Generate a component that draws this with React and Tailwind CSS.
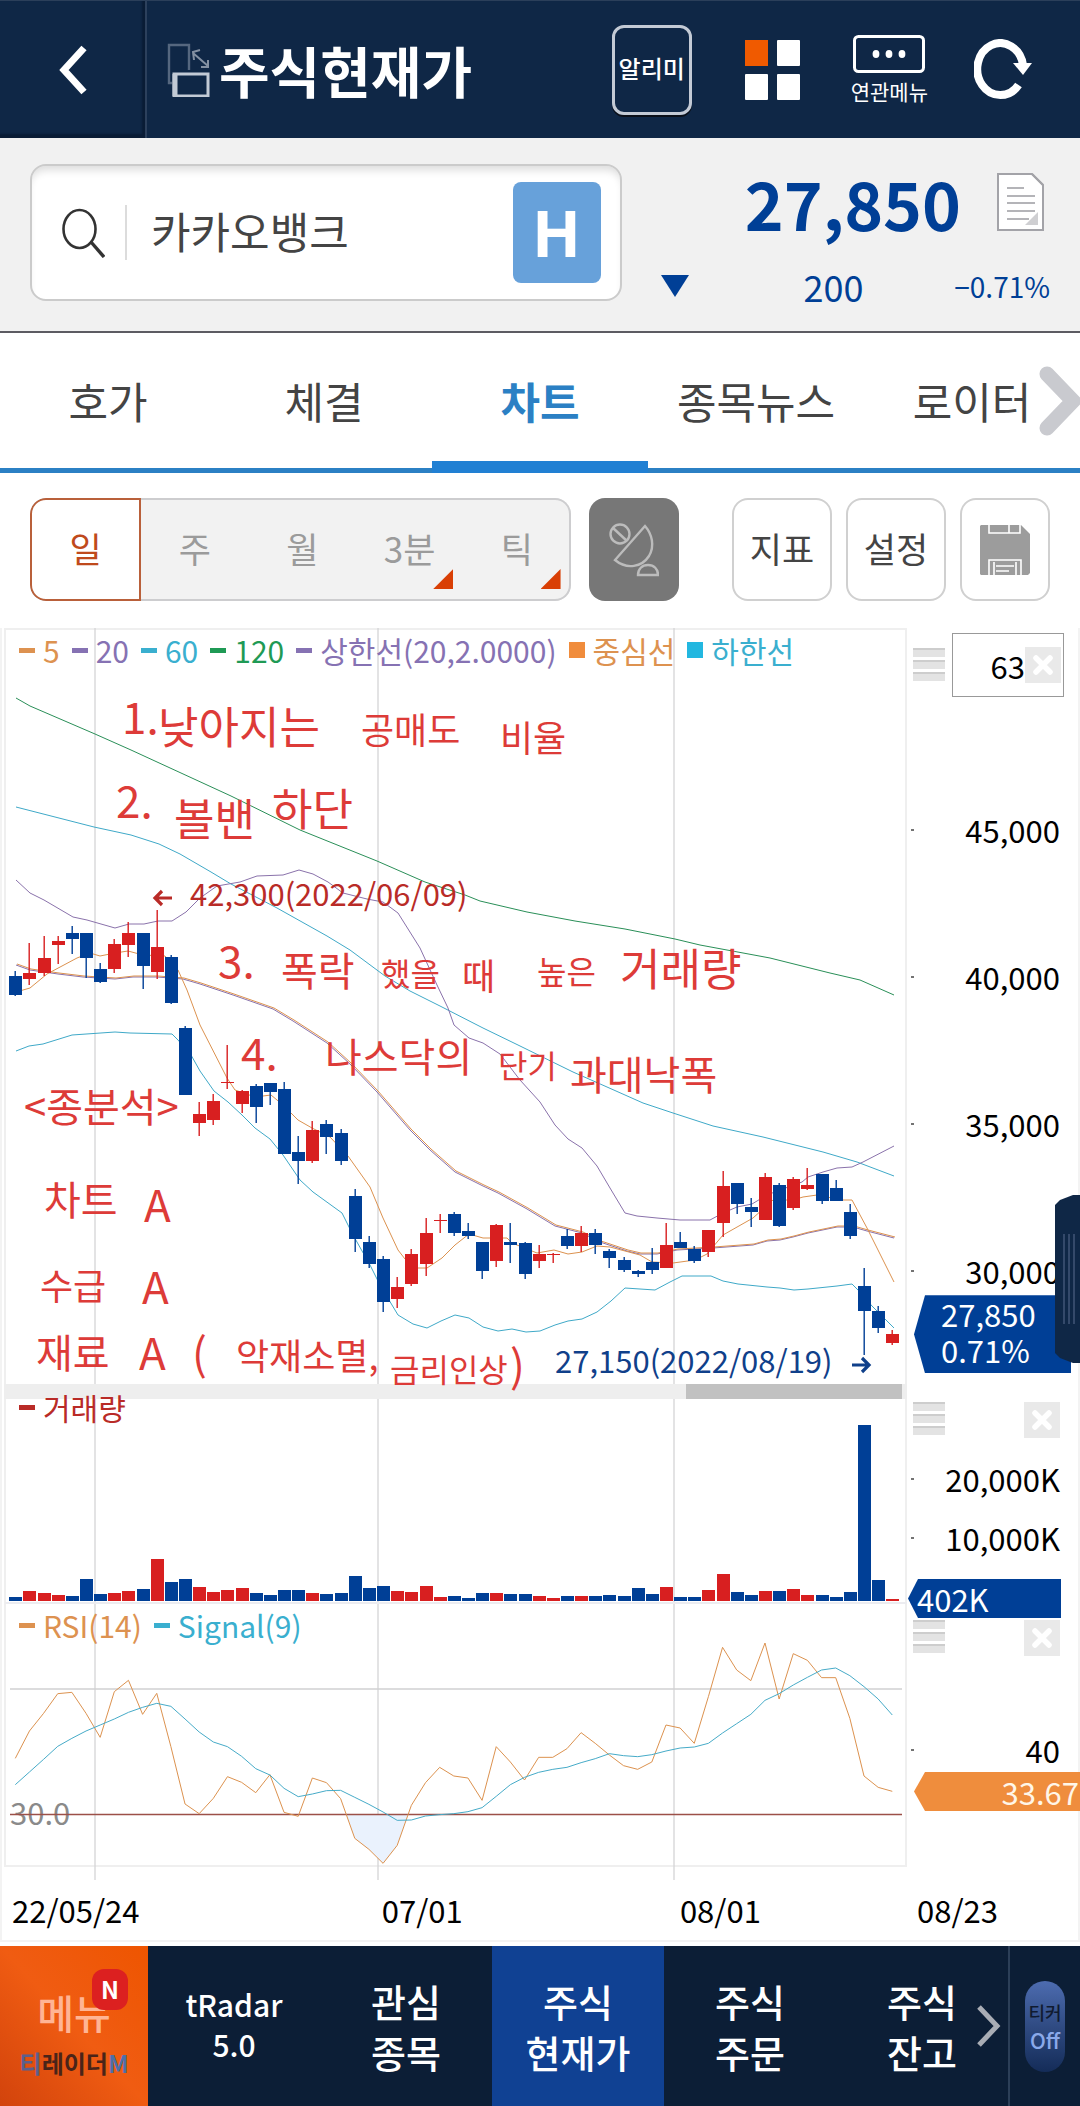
import { useState } from "react";

const RED = "#d81f20";
const BLUE = "#003f96";

// r = up day, b = down day, then high / body top / body bottom / low
const candles = [
  ["b", 971, 976, 995, 996], ["r", 943, 973, 979, 985], ["r", 936, 958, 973, 976],
  ["r", 936, 941, 945, 964], ["b", 926, 933, 939, 954], ["b", 933, 933, 958, 978],
  ["b", 963, 969, 982, 983], ["r", 939, 944, 969, 973], ["r", 922, 933, 945, 957],
  ["b", 933, 933, 966, 989], ["r", 910, 947, 972, 979], ["b", 955, 957, 1003, 1004],
  ["b", 1026, 1028, 1095, 1095], ["r", 1102, 1114, 1123, 1136], ["r", 1094, 1101, 1120, 1125],
  ["r", 1045, 1082, 1083, 1089], ["r", 1090, 1091, 1104, 1113], ["b", 1084, 1086, 1107, 1123],
  ["b", 1083, 1083, 1092, 1105], ["b", 1082, 1089, 1154, 1154], ["b", 1136, 1152, 1161, 1184],
  ["r", 1121, 1130, 1161, 1163], ["b", 1120, 1124, 1137, 1154], ["b", 1129, 1133, 1161, 1165],
  ["b", 1189, 1196, 1239, 1252], ["b", 1236, 1242, 1264, 1268], ["b", 1256, 1259, 1302, 1312],
  ["r", 1277, 1287, 1299, 1308], ["r", 1249, 1254, 1284, 1286], ["r", 1218, 1233, 1264, 1276],
  ["r", 1214, 1220, 1221, 1233], ["b", 1212, 1214, 1233, 1236], ["b", 1223, 1231, 1236, 1239],
  ["b", 1242, 1242, 1271, 1279], ["r", 1224, 1225, 1261, 1267], ["b", 1223, 1242, 1245, 1263],
  ["b", 1242, 1243, 1274, 1279], ["r", 1245, 1254, 1261, 1268], ["r", 1253, 1254, 1255, 1263],
  ["b", 1229, 1236, 1246, 1249], ["r", 1226, 1233, 1246, 1252], ["b", 1229, 1233, 1245, 1254],
  ["b", 1249, 1251, 1258, 1268], ["b", 1257, 1260, 1270, 1272], ["b", 1270, 1271, 1274, 1277],
  ["b", 1248, 1262, 1270, 1274], ["r", 1223, 1245, 1268, 1268], ["b", 1232, 1242, 1248, 1248],
  ["b", 1246, 1249, 1261, 1263], ["r", 1230, 1230, 1252, 1257], ["r", 1171, 1186, 1223, 1237],
  ["b", 1183, 1183, 1204, 1214], ["b", 1198, 1207, 1212, 1227], ["r", 1173, 1177, 1220, 1220],
  ["b", 1183, 1185, 1226, 1227], ["r", 1177, 1179, 1208, 1210], ["r", 1168, 1185, 1189, 1190],
  ["b", 1174, 1174, 1201, 1204], ["b", 1180, 1188, 1201, 1201], ["b", 1204, 1212, 1236, 1239],
  ["b", 1268, 1286, 1311, 1355], ["b", 1306, 1311, 1328, 1333], ["r", 1330, 1334, 1343, 1345],
];

const volumes = [
  4, 10, 8, 6, 5, 22, 7, 8, 10, 12, 42, 19, 22, 14, 9, 11, 13, 8, 6, 11, 11, 8,
  7, 8, 25, 13, 15, 10, 9, 15, 4, 5, 3, 8, 8, 7, 7, 5, 3, 5, 5, 5, 6, 5, 13, 7,
  14, 4, 4, 11, 27, 9, 6, 10, 10, 12, 6, 6, 4, 9, 176, 21, 2,
];

const rsi = [
  1105, 1023, 970, 911, 907, 970, 1042, 905, 871, 973, 910, 1070, 1242, 1271,
  1225, 1160, 1177, 1208, 1154, 1267, 1279, 1164, 1178, 1226, 1345, 1378, 1420,
  1366, 1246, 1178, 1132, 1158, 1164, 1231, 1070, 1116, 1170, 1102, 1102, 1076,
  1028, 1060, 1095, 1127, 1138, 1116, 1005, 1014, 1060, 920, 772, 840, 872, 759,
  927, 791, 811, 863, 863, 985, 1158, 1192, 1204,
];

const signal = [
  1184, 1146, 1108, 1069, 1045, 1023, 1005, 987, 967, 952, 940, 949, 987, 1026,
  1056, 1070, 1099, 1136, 1155, 1195, 1220, 1212, 1202, 1201, 1222, 1243, 1266,
  1291, 1290, 1278, 1274, 1271, 1265, 1253, 1219, 1184, 1162, 1147, 1138, 1132,
  1118, 1106, 1091, 1097, 1100, 1094, 1083, 1074, 1071, 1060, 1029, 1001, 973,
  931, 911, 885, 862, 840, 834, 857, 890, 927, 975,
];

const lines = {
  ma120:
    "16,698 30,706 95,734 131,750 181,773 231,796 300,830 377,861 425,882 465,895 480,901 527,912 575,921 625,929 675,939 700,945 770,958 830,973 860,980 894,995",
  ma60:
    "16,807 94,827 131,835 159,844 180,854 211,872 231,884 277,908 327,936 350,950 385,976 410,991 440,1006 483,1028 518,1045 573,1072 607,1087 643,1103 673,1113 713,1126 763,1137 823,1152 857,1162 894,1176",
  upper:
    "16,880 30,893 44,900 73,917 87,920 115,928 129,924 144,924 158,921 172,921 186,912 200,898 217,886 240,882 257,876 283,875 299,870 313,874 328,882 343,893 367,899 383,902 398,913 420,948 437,985 448,1008 454,1025 469,1038 483,1043 500,1054 520,1080 540,1102 555,1125 568,1139 582,1148 597,1166 610,1188 625,1213 637,1216 657,1218 680,1220 710,1220 723,1213 737,1207 752,1204 767,1195 780,1190 802,1182 808,1177 823,1172 837,1168 852,1167 863,1162 894,1146",
  lower:
    "16,1051 29,1046 43,1044 72,1035 115,1032 130,1033 172,1034 178,1040 191,1055 200,1071 214,1091 228,1102 242,1115 255,1128 270,1139 283,1155 300,1180 313,1192 342,1213 353,1235 370,1265 380,1285 398,1315 413,1324 427,1328 441,1321 455,1315 469,1318 483,1327 498,1331 512,1329 526,1332 540,1331 555,1325 568,1321 582,1319 597,1312 611,1301 625,1288 655,1290 670,1282 682,1276 711,1276 723,1281 738,1284 767,1287 780,1288 794,1290 808,1289 837,1286 852,1284 858,1290 872,1306 894,1328",
  ma5:
    "16,992 30,988 47,974 77,958 90,953 100,956 115,953 128,951 143,955 165,956 178,970 187,990 200,1025 227,1078 235,1090 255,1097 271,1095 283,1105 298,1120 312,1128 330,1137 348,1156 370,1187 383,1218 398,1250 405,1259 418,1268 427,1268 442,1258 455,1245 469,1234 483,1238 507,1238 512,1243 537,1253 554,1250 568,1254 582,1252 597,1246 610,1247 640,1255 652,1262 673,1263 695,1260 707,1254 723,1235 753,1218 773,1200 793,1200 803,1197 817,1195 842,1200 852,1200 867,1228 894,1282",
  mid:
    "16,965 30,970 58,974 83,977 115,979 133,977 157,977 183,979 200,984 233,995 273,1009 293,1021 327,1043 350,1064 377,1092 410,1130 430,1150 455,1172 483,1186 498,1193 527,1209 555,1226 582,1233 600,1242 627,1251 640,1254 657,1254 677,1250 713,1248 753,1245 767,1241 780,1240 793,1237 808,1233 837,1227 853,1227 867,1231 894,1238",
};

const notes = [
  [122, 734, 44, "1."], [158, 744, 44, "낮아지는"], [361, 744, 36, "공매도"], [500, 752, 36, "비율"],
  [116, 818, 44, "2."], [174, 836, 44, "볼밴"], [272, 826, 44, "하단"],
  [218, 978, 44, "3."], [281, 986, 40, "폭락"], [381, 986, 32, "했을"], [462, 990, 36, "때"],
  [537, 984, 32, "높은"], [620, 986, 44, "거래량"],
  [241, 1070, 44, "4."], [325, 1072, 40, "나스닥의"], [498, 1078, 32, "단기"], [570, 1090, 40, "과대낙폭"],
  [24, 1122, 40, "<종분석>"],
  [44, 1215, 40, "차트"], [144, 1222, 44, "A"],
  [40, 1300, 36, "수급"], [142, 1304, 44, "A"],
  [36, 1368, 40, "재료"], [139, 1370, 44, "A"], [192, 1370, 44, "("],
  [236, 1370, 36, "악재소멸,"], [390, 1382, 32, "금리인상"], [510, 1382, 44, ")"],
];

const gridX = [95, 378, 674];
const xAt = (i) => 15.3 + i * 14.145;
const rsiY = (v) => (v - 642) / 3;
const toPoints = (values) => values.map((v, i) => `${xAt(i)},${rsiY(v)}`).join(" ");
const priceTop = (price) => ((1271 - (price - 30000) * 0.0294 - 628) / 756) * 100;

function GridLines({ y1, y2 }) {
  return gridX.map((x) => (
    <line key={x} x1={x} x2={x} y1={y1} y2={y2} stroke="#d4d4d6" strokeWidth="1.3" />
  ));
}

function Legend({ items }) {
  return (
    <div className="flex items-center gap-3 pl-[15px] text-[30px] leading-9 whitespace-nowrap">
      {items.map(([label, text, mark, square]) => (
        <span key={label} className={`flex items-center gap-2 ${text}`}>
          <i className={`w-4 ${square ? "h-4" : "h-[5px]"} ${mark}`} />
          {label}
        </span>
      ))}
    </div>
  );
}

function DragHandle() {
  return (
    <button aria-label="이동" className="flex w-8 flex-col gap-[3px]">
      {[0, 1, 2].map((n) => (
        <span key={n} className="h-[9px] border-t-2 border-[#cdcdcd] bg-[#e3e3e3]" />
      ))}
    </button>
  );
}

function CloseButton() {
  return (
    <button aria-label="닫기" className="flex size-9 shrink-0 items-center justify-center bg-[#e9e9e9]">
      <svg width="22" height="22" viewBox="0 0 22 22" stroke="#fff" strokeWidth="5.5" strokeLinecap="round">
        <path d="M4 4l14 14M18 4L4 18" />
      </svg>
    </button>
  );
}

function Tick({ top, children }) {
  return (
    <div
      className="absolute right-[18px] left-1 flex -translate-y-1/2 items-center justify-between text-[31px] leading-9 text-black"
      style={{ top: `${top}%` }}
    >
      <span className="h-[2px] w-[3px] bg-neutral-500" />
      {children}
    </div>
  );
}

function Header() {
  return (
    <header className="flex h-[138px] items-stretch border-t border-[#2b3f5a] bg-[#0f2746] text-white shadow-[0_2px_3px_rgba(0,0,0,0.35)]">
      <button aria-label="뒤로" className="flex w-[147px] items-center justify-center border-r-2 border-[#2c405c] shadow-[inset_-3px_-4px_2px_#0a1c35]">
        <svg width="30" height="50" viewBox="0 0 30 50" fill="none" stroke="#fff" strokeWidth="7">
          <path d="M26 3L6 25l20 22" />
        </svg>
      </button>
      <div className="flex flex-1 items-center pr-12 pl-5">
        <svg width="44" height="54" viewBox="0 0 44 54" fill="none">
          <path d="M22 27V2H2v38h3" stroke="#55677f" strokeWidth="2.4" />
          <rect x="7" y="31" width="34" height="22" stroke="#c2cad5" strokeWidth="3" />
          <path d="M8 31v22" stroke="#c2cad5" strokeWidth="5" />
          <path d="M26 10l15 13M33 7l-7 2 1 8M34 24h7v-7" stroke="#8390a2" strokeWidth="2" />
        </svg>
        <h1 className="ml-2 flex-1 text-[55px] leading-none font-bold whitespace-nowrap">주식현재가</h1>
        <button className="h-[90px] w-20 shrink-0 rounded-xl border-[3px] border-[#c3cad5] pb-1 text-2xl font-medium whitespace-nowrap shadow-[0_2px_0_#0a0f18]">
          알리미
        </button>
        <button aria-label="화면 목록" className="ml-[53px]">
          <svg width="55" height="60" viewBox="0 0 55 60">
            <rect width="23" height="26" fill="#f05a00" />
            <rect x="32" width="23" height="26" rx="1" fill="#fff" />
            <rect y="34" width="23" height="26" rx="1" fill="#fff" />
            <rect x="32" y="34" width="23" height="26" rx="1" fill="#fff" />
          </svg>
        </button>
        <button className="ml-[51px] flex flex-col items-center gap-1 text-[21px] leading-7">
          <svg width="72" height="38" viewBox="0 0 72 38" fill="none">
            <rect x="1.5" y="1.5" width="69" height="35" rx="4" stroke="#fff" strokeWidth="3" />
            <g fill="#fff">
              <ellipse cx="23" cy="19" rx="3.4" ry="4" />
              <ellipse cx="36" cy="19" rx="3.4" ry="4" />
              <ellipse cx="49" cy="19" rx="3.4" ry="4" />
            </g>
          </svg>
          연관메뉴
        </button>
        <button aria-label="새로고침" className="ml-[46px]">
          <svg width="58" height="62" viewBox="0 0 58 62" fill="none">
            <path d="M44.5 46A23 26 0 1 1 49 26" stroke="#fff" strokeWidth="8" />
            <path d="M39 24h19L49 36z" fill="#fff" />
          </svg>
        </button>
      </div>
    </header>
  );
}

function Quote() {
  return (
    <section className="flex h-[195px] items-start border-b-2 border-[#5c5b62] bg-[#f1f1f1] pt-[26px] pr-[30px] pl-[30px] text-[#003f96]">
      <div className="flex h-[137px] w-[58%] items-center rounded-2xl border-2 border-[#cbcbcb] bg-white pr-[19px] pl-[30px] shadow-[inset_0_8px_8px_-4px_rgba(0,0,0,0.14)]">
        <svg width="43" height="50" viewBox="0 0 43 50" fill="none" stroke="#333">
          <ellipse cx="17.500" cy="21" rx="16" ry="19" strokeWidth="2.6" />
          <path d="M29 34l13 15" strokeWidth="3.4" />
        </svg>
        <span className="ml-5 h-[55px] w-[2px] bg-[#dcdcdc]" />
        <input
          aria-label="종목명"
          defaultValue="카카오뱅크"
          className="ml-6 min-w-0 flex-1 pb-[6px] text-[43px] leading-none text-[#444] outline-none"
        />
        <button className="h-[101px] w-[88px] rounded-lg bg-[#67a1da] font-['Open_Sans',sans-serif] text-[64px] leading-none font-bold text-white">
          H
        </button>
      </div>
      <div className="ml-[39px] flex flex-1 flex-col gap-6">
        <div className="flex items-center justify-end pr-[6px]">
          <strong className="text-[66px] leading-[76px] font-bold">27,850</strong>
          <button aria-label="종목 정보" className="ml-9">
            <svg width="47" height="58" viewBox="0 0 47 58" fill="none">
              <path d="M1 1h34l11 11v45H1z" fill="#fff" stroke="#a3a3a8" strokeWidth="2" />
              <path d="M35 1v0l11 11" stroke="#a3a3a8" strokeWidth="2" />
              <path d="M10 15h17M10 23h28M10 30h28M10 38h28M10 46h22" stroke="#b4b4b8" strokeWidth="2" />
              <path d="M41 39v13H28z" fill="#cfcfd2" />
            </svg>
          </button>
        </div>
        <div className="flex items-center justify-between">
          <svg width="28" height="22" viewBox="0 0 28 22" fill={BLUE}>
            <path d="M0 0h28L14 22z" />
          </svg>
          <span className="pl-6 text-4xl leading-[44px]">200</span>
          <span className="text-[28px] leading-[44px]">−0.71%</span>
        </div>
      </div>
    </section>
  );
}

function Tabs() {
  const [active, setActive] = useState("차트");
  return (
    <nav className="relative flex h-[140px] border-b-[5px] border-[#2b80c4]">
      {["호가", "체결", "차트", "종목뉴스", "로이터"].map((tab) => (
        <button
          key={tab}
          onClick={() => setActive(tab)}
          className={`-mb-[5px] flex-1 border-b-[12px] pt-[6px] text-[43px] leading-none ${
            tab === active
              ? "border-[#2180d3] font-bold text-[#2b80c4]"
              : "border-transparent text-[#444]"
          }`}
        >
          {tab}
        </button>
      ))}
      <button aria-label="다음 탭" className="absolute top-8 right-0">
        <svg width="42" height="72" viewBox="0 0 42 72" fill="none" stroke="#c9cacf" strokeWidth="15" strokeLinecap="round">
          <path d="M9 9l26 27L9 63" />
        </svg>
      </button>
    </nav>
  );
}

function Toolbar() {
  const [period, setPeriod] = useState("일");
  return (
    <div className="flex h-[155px] items-center px-[30px] pb-[2px] text-[35px] leading-none text-[#444]">
      <div className="flex h-[103px] w-[53%] overflow-hidden rounded-2xl bg-[#f2f2f2] shadow-[inset_0_0_0_2px_#cdcdcf]">
        {["일", "주", "월", "3분", "틱"].map((name, i) => (
          <button
            key={name}
            onClick={() => setPeriod(name)}
            className={`relative flex-1 pb-1 ${
              name === period
                ? "rounded-l-2xl border-2 border-[#b9603a] bg-white text-[#bf4a1c]"
                : "text-[#9b9b9b]"
            }`}
          >
            {name}
            {i > 2 && (
              <span className="absolute right-[10px] bottom-3 size-5 bg-[#d93f05] [clip-path:polygon(100%_0,100%_100%,0_100%)]" />
            )}
          </button>
        ))}
      </div>
      <button aria-label="실시간 끄기" className="ml-[18px] flex h-[103px] w-[90px] items-center justify-center rounded-2xl bg-[#777]">
        <svg width="50" height="54" viewBox="0 0 50 54" fill="none" stroke="#bcbcbc" strokeWidth="2.4">
          <circle cx="11" cy="11" r="9.500" />
          <path d="M4 5l14 13" />
          <path d="M36 3L6 37c12 10 27 7 34-4 6-10 3-22-4-30z" />
          <path d="M29 52c0-6 4-10 10-10s10 4 10 10z" />
        </svg>
      </button>
      <div className="ml-auto flex gap-[14px]">
        <button className="h-[103px] w-[100px] rounded-2xl border-2 border-[#d0d0d0] pb-1">지표</button>
        <button className="h-[103px] w-[100px] rounded-2xl border-2 border-[#d0d0d0] pb-1">설정</button>
        <button aria-label="저장" className="flex h-[103px] w-[90px] items-center justify-center rounded-2xl border-2 border-[#d0d0d0]">
          <svg width="50" height="50" viewBox="0 0 50 50">
            <path d="M1 0h40l9 9v39l-2 2H1l-1-1V1z" fill="#9c9c9c" />
            <g fill="none" stroke="#fff" strokeWidth="1.6">
              <path d="M9 0v8h31V0M29 0v8" />
              <path d="M9 50V35h32v15M14 50V37M36 50V37" />
              <path d="M16 41h18M16 46h13" />
            </g>
          </svg>
        </button>
      </div>
    </div>
  );
}

function PricePanel() {
  return (
    <div className="flex">
      <div className="relative z-10 min-w-0 flex-1">
        <svg viewBox="4 628 903 756" className="block h-auto w-full overflow-visible">
          <path d="M5 1384V629h901v755" fill="none" stroke="#efefef" strokeWidth="2" />
          <GridLines y1={628} y2={1384} />
          <g fill="none" strokeWidth="1">
            <polyline points={lines.ma120} stroke="#2a8f58" />
            <polyline points={lines.ma60} stroke="#3fa9c8" />
            <polyline points={lines.upper} stroke="#8a72ab" />
            <polyline points={lines.lower} stroke="#3fa9c8" />
            <polyline points={lines.mid} stroke="#8a72ab" />
            <polyline points={lines.mid} stroke="#dc924f" transform="translate(1 -1)" />
            <polyline points={lines.ma5} stroke="#dc924f" />
          </g>
          {candles.map(([dir, high, top, bottom, low], i) => {
            const x = Math.round(xAt(i));
            return (
              <g key={i} fill={dir === "r" ? RED : BLUE}>
                <rect x={x - 0.5} y={high} width="1.400" height={low - high} />
                <rect x={x - 6} y={top} width="13" height={Math.max(bottom - top, 1)} />
              </g>
            );
          })}
          <g fill="none" strokeWidth="3.200">
            <path d="M172 898h-17M162 891l-7 7 7 7" stroke="#b92b27" />
            <path d="M852 1365h17M862 1358l7 7-7 7" stroke="#10408a" />
          </g>
          <text x="190" y="906" fontSize="31" fill="#b92b27">42,300(2022/06/09)</text>
          <text x="555" y="1373" fontSize="31" fill="#10408a">27,150(2022/08/19)</text>
          <g fill="#dd3b38">
            {notes.map(([x, y, size, text]) => (
              <text key={`${x}-${y}`} x={x} y={y} fontSize={size}>{text}</text>
            ))}
          </g>
        </svg>
        <div className="absolute top-1 left-0">
          <Legend
            items={[
              ["5", "text-[#dd9250]", "bg-[#dd9250]"],
              ["20", "text-[#8672b3]", "bg-[#8672b3]"],
              ["60", "text-[#3aafcf]", "bg-[#3aafcf]"],
              ["120", "text-[#1f9a55]", "bg-[#1f9a55]"],
              ["상한선(20,2.0000)", "text-[#8672b3]", "bg-[#8672b3]"],
              ["중심선", "text-[#dd9250]", "bg-[#f08c3c]", true],
              ["하한선", "text-[#3aafcf]", "bg-[#22b7e0]", true],
            ]}
          />
        </div>
      </div>
      <div className="relative w-[171px] shrink-0">
        <div className="flex items-start justify-between pt-[5px] pr-[14px] pl-[6px]">
          <div className="pt-[15px]">
            <DragHandle />
          </div>
          <div className="flex h-16 w-[112px] items-center border border-[#999] pr-[2px]">
            <input
              aria-label="봉 개수"
              defaultValue="63"
              className="min-w-0 flex-1 text-right text-[31px] leading-none text-black outline-none"
            />
            <CloseButton />
          </div>
        </div>
        {[45000, 40000, 35000, 30000].map((p) => (
          <Tick key={p} top={priceTop(p)}>{p.toLocaleString("en-US")}</Tick>
        ))}
        <div
          className="absolute right-[7px] left-[7px] -translate-y-1/2 bg-[#003f96] pt-[1px] pb-[5px] pl-[27px] text-[31px] leading-9 text-white [clip-path:polygon(0_50%,11px_0,100%_0,100%_100%,11px_100%)]"
          style={{ top: `${priceTop(27850)}%` }}
        >
          27,850
          <br />
          0.71%
        </div>
        <button aria-label="서랍 열기" className="absolute top-[75%] -right-[2px] flex h-[168px] w-[25px] items-center gap-[3px] bg-[#0f2746] pl-2 [clip-path:polygon(0_6%,5px_3%,72%_0,100%_0,100%_100%,72%_100%,5px_97%,0_94%)]">
          <i className="h-[90px] w-[2px] bg-[#34496a]" />
          <i className="h-[90px] w-[2px] bg-[#34496a]" />
          <i className="h-[90px] w-[2px] bg-[#34496a]" />
        </button>
      </div>
    </div>
  );
}

function VolumePanel() {
  return (
    <div className="flex">
      <div className="relative min-w-0 flex-1">
        <svg viewBox="4 0 903 205" className="block h-auto w-full">
          <path d="M5 0v205M906 0v205" stroke="#efefef" strokeWidth="2" />
          <GridLines y1={0} y2={205} />
          <rect x="5" y="203" width="902" height="2" fill="#ececf0" />
          {volumes.map((v, i) => (
            <rect
              key={i}
              x={Math.round(xAt(i)) - 6}
              y={202 - v}
              width="13"
              height={v}
              fill={candles[i][0] === "r" ? RED : BLUE}
            />
          ))}
        </svg>
        <div className="absolute -top-[10px] left-0">
          <Legend items={[["거래량", "text-[#b92b27]", "bg-[#b92b27]"]]} />
        </div>
      </div>
      <div className="relative w-[171px] shrink-0">
        <div className="flex justify-between pt-[3px] pr-[18px] pl-[6px]">
          <DragHandle />
          <CloseButton />
        </div>
        <Tick top={39}>20,000K</Tick>
        <Tick top={68}>10,000K</Tick>
        <div className="absolute right-[17px] -bottom-[14px] left-[1px] bg-[#003f96] pl-[9px] text-[31px] leading-[39px] text-white [clip-path:polygon(0_50%,10px_0,100%_0,100%_100%,10px_100%)]">
          402K
        </div>
      </div>
    </div>
  );
}

function RsiPanel() {
  const oversold = [[23.4, 1273], [24, 1345], [25, 1378], [26, 1420], [27, 1366], [27.77, 1273]];
  return (
    <div className="flex">
      <div className="relative min-w-0 flex-1">
        <svg viewBox="4 0 903 276" className="block h-auto w-full">
          <path d="M5 0v262h901V0" fill="none" stroke="#efefef" strokeWidth="2" />
          <GridLines y1={0} y2={276} />
          <polygon points={oversold.map(([i, v]) => `${xAt(i)},${rsiY(v)}`).join(" ")} fill="#eaf2fd" />
          <line x1="10" x2="902" y1="85" y2="85" stroke="#d0d0d2" strokeWidth="1.500" />
          <text x="10" y="221" fontSize="31" fill="#8a8a8a">30.0</text>
          <line x1="10" x2="902" y1="210.500" y2="210.500" stroke="#9c5048" strokeWidth="1.300" />
          <g fill="none" strokeWidth="1">
            <polyline points={toPoints(rsi)} stroke="#dc924f" />
            <polyline points={toPoints(signal)} stroke="#46abc8" />
          </g>
        </svg>
        <div className="absolute top-[3px] left-0">
          <Legend
            items={[
              ["RSI(14)", "text-[#dd9250]", "bg-[#dd9250]"],
              ["Signal(9)", "text-[#3aafcf]", "bg-[#3aafcf]"],
            ]}
          />
        </div>
      </div>
      <div className="relative w-[171px] shrink-0">
        <div className="flex justify-between pt-4 pr-[18px] pl-[6px]">
          <DragHandle />
          <CloseButton />
        </div>
        <Tick top={53}>40</Tick>
        <div className="absolute top-[168px] -right-[2px] left-[7px] bg-[#ef8d3d] pr-[1px] text-right text-[31px] leading-[39px] text-[#fff6e8] [clip-path:polygon(0_50%,11px_0,100%_0,100%_100%,11px_100%)]">
          33.67
        </div>
      </div>
    </div>
  );
}

function BottomBar() {
  const items = [["tRadar", "5.0"], ["관심", "종목"], ["주식", "현재가"], ["주식", "주문"], ["주식", "잔고"]];
  return (
    <footer className="flex h-40 bg-[#0c1e36] font-medium text-white">
      <button className="relative w-[148px] shrink-0 bg-linear-to-tr from-[#d2430c] via-[#f05c12] to-[#ee5500] pt-7 text-[40px] leading-[46px] text-[#ffb494]">
        메뉴
        <span className="block text-2xl leading-[56px] font-bold">
          <span className="text-[#5b5f8c]">티</span>
          <span className="text-[#4a2419]">레이더</span>
          <span className="text-[#4d6fa8]">M</span>
        </span>
        <span className="absolute top-[23px] left-[92px] h-[41px] w-9 rounded-xl bg-[#dc2020] text-2xl leading-10 font-bold text-white">N</span>
      </button>
      {items.map(([first, second], i) => (
        <a
          key={i}
          href="#"
          className={`flex flex-1 flex-col items-center justify-center whitespace-nowrap ${
            i === 0 ? "pb-1 text-[30px] leading-10" : "text-[38px] leading-[51px]"
          } ${i === 2 ? "bg-[#104193]" : ""}`}
        >
          <span>{first}</span>
          <span>{second}</span>
        </a>
      ))}
      <div className="relative flex w-[72px] shrink-0 items-center justify-center border-l-2 border-[#2c3f58]">
        <svg className="absolute right-[78px]" width="26" height="42" viewBox="0 0 26 42" fill="none" stroke="#a9adb5" strokeWidth="5">
          <path d="M3 2l18 19L3 40" />
        </svg>
        <button className="h-[91px] w-10 rounded-full bg-linear-to-b from-[#4d6cb0] to-[#142c58] text-[18px] leading-7 font-medium text-[#101b30]">
          티커
          <span className="block text-[21px] text-[#8aa9ea]">Off</span>
        </button>
      </div>
    </footer>
  );
}

export default function App() {
  return (
    <div className="flex min-h-screen flex-col overflow-x-hidden bg-white font-['Noto_Sans_CJK_KR',sans-serif]">
      <Header />
      <Quote />
      <Tabs />
      <Toolbar />
      <main className="flex-1 border-x-2 border-b-2 border-[#f3f3f3] pl-[2px]">
        <PricePanel />
        <div className="mr-[171px] h-[15px] bg-[#eeeeee] pr-[5px]">
          <div className="ml-auto h-full w-[24%] bg-[#c1c1c1]" />
        </div>
        <VolumePanel />
        <RsiPanel />
        <div className="mr-[80px] flex text-[31px] leading-[60px] text-black">
          <span className="w-[38%] pl-2">22/05/24</span>
          <span className="w-[30%]">07/01</span>
          <span className="flex-1">08/01</span>
          <span>08/23</span>
        </div>
      </main>
      <div className="h-1" />
      <BottomBar />
    </div>
  );
}
